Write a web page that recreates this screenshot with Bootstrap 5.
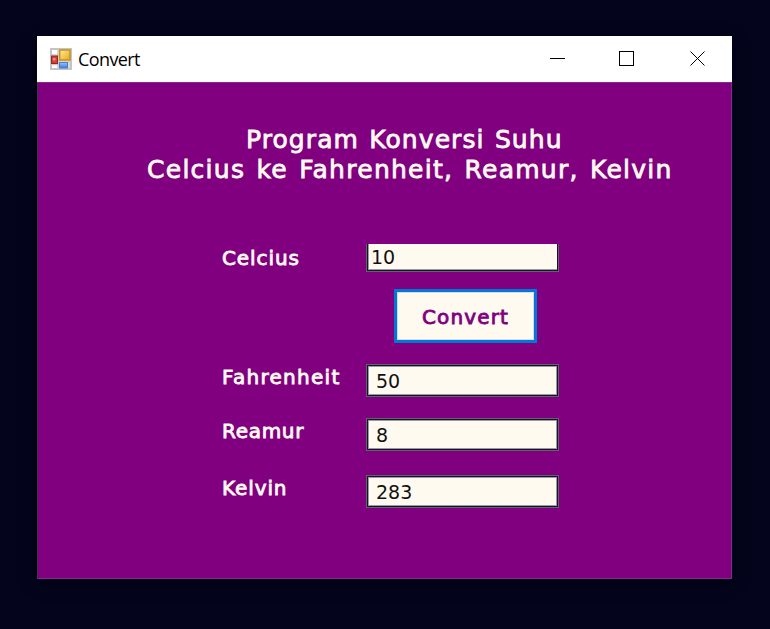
<!DOCTYPE html>
<html lang="id">
<head>
<meta charset="utf-8">
<title>Convert</title>
<link href="https://cdn.jsdelivr.net/npm/bootstrap@5.3.0/dist/css/bootstrap.min.css" rel="stylesheet">
<style>
body{background:#04041c;height:629px;padding:36px 38px 50px 37px;overflow:hidden;font-family:"DejaVu Sans",Verdana,sans-serif}
.window{width:695px;height:543px;background:purple;box-shadow:0 4px 14px #020212}
.titlebar{height:46px;background:#fff;color:#000;padding-left:13px}
.title-text{font:18px/24px "Open Sans","Segoe UI",sans-serif;letter-spacing:-.6px;margin-left:6px}
.controls{margin-left:auto;width:209px;height:46px}
.client{height:497px;border:1px solid #7d2f86;border-left-color:#45304f;border-top-color:#8a2a8e;padding-top:42px}
.heading{color:floralwhite;font-size:25px;line-height:30px;-webkit-text-stroke:.8px floralwhite;white-space:nowrap;font-weight:400;margin:0}
.line-a{margin-left:208px;letter-spacing:1.07px;word-spacing:1.3px}
.line-b{margin-left:109px;letter-spacing:1.27px;word-spacing:2px}
.fields{display:grid;grid-template-columns:144px 193px;grid-template-rows:28px 17px 54px 21px 33px 21px 33px 24px 33px;margin:59px 0 0 184px}
.fields label{color:floralwhite;font-size:20px;line-height:24px;-webkit-text-stroke:.85px floralwhite;white-space:nowrap;padding-top:1px}
.box{background:floralwhite;color:#111;border:1px solid #65606d;box-shadow:inset 0 0 0 1px #14142b,inset 0 0 0 2px #9a98a0;height:33px;font-size:19px;line-height:33px;padding-left:9px;grid-column:2}
.box.entry{height:28px;border-top:0;box-shadow:inset 1px -1px 0 #14142b,inset -1px -1px 0 #14142b,inset 2px -2px 0 #9a98a0;line-height:27px;padding-left:4px}
.convert,.convert:hover{width:143px;height:54px;background:floralwhite;color:purple;border:3px solid #0078d7;box-shadow:inset 0 0 0 1px #d3dbe4;border-radius:0;font-size:20px;letter-spacing:1.15px;-webkit-text-stroke:.85px purple;padding:2px 0 0;grid-row:3;grid-column:2;margin-left:28px}
.row-celcius{grid-row:1}
.row-fahrenheit{grid-row:5}
.row-reamur{grid-row:7}
.row-kelvin{grid-row:9}
label.row-celcius{padding-top:2px;letter-spacing:.9px}
label.row-fahrenheit{letter-spacing:1.28px}
label.row-reamur{letter-spacing:.7px}
label.row-kelvin{letter-spacing:.9px}
</style>
<script src="https://cdn.jsdelivr.net/npm/bootstrap@5.3.0/dist/js/bootstrap.bundle.min.js"></script>
</head>
<body>
<main class="window">
<header class="titlebar d-flex align-items-center">
<svg width="22" height="22" viewBox="0 0 22 22" aria-hidden="true">
<defs><linearGradient id="gold" x2="1" y2="1"><stop stop-color="#ffeaa0"/><stop offset="1" stop-color="#eaa914"/></linearGradient><linearGradient id="blue" y2="1" x2="0"><stop stop-color="#9cc3fb"/><stop offset="1" stop-color="#3f79d9"/></linearGradient></defs>
<rect x="1" y="1" width="20" height="20" fill="#fff" stroke="#c4c4c4" stroke-width="2"/>
<path d="M8 1v20M1 7h8M1 16.500h8M8 13h13M19 13v8" stroke="#c9c9c9" stroke-width="1.500"/>
<rect x="9.700" y="2" width="10.300" height="10" fill="url(#gold)" stroke="#c1941f" stroke-width="1.500"/>
<rect x="1.500" y="8" width="6" height="7.500" fill="#d0423a" stroke="#9b2420"/>
<rect x="3" y="10" width="2.500" height="2.500" fill="#ea8f83"/>
<rect x="9.500" y="14.500" width="8" height="5.500" fill="url(#blue)" stroke="#4a7fd2"/>
</svg>
<span class="title-text">Convert</span>
<svg class="controls" viewBox="0 0 209 46" fill="none" stroke="#000" aria-hidden="true">
<path d="M27 22.500h15M96.500 15.500h14v14h-14z" shape-rendering="crispEdges"/><path d="M167.500 15.500l14 14m0-14l-14 14"/>
</svg>
</header>
<section class="client">
<h1 class="heading"><span class="line-a d-block">Program Konversi Suhu</span><span class="line-b d-block">Celcius ke Fahrenheit, Reamur, Kelvin</span></h1>
<form class="fields">
<label class="row-celcius">Celcius</label><div class="box entry row-celcius">10</div>
<button type="button" class="btn convert">Convert</button>
<label class="row-fahrenheit">Fahrenheit</label><div class="box row-fahrenheit">50</div>
<label class="row-reamur">Reamur</label><div class="box row-reamur">8</div>
<label class="row-kelvin">Kelvin</label><div class="box row-kelvin">283</div>
</form>
</section>
</main>
</body>
</html>
